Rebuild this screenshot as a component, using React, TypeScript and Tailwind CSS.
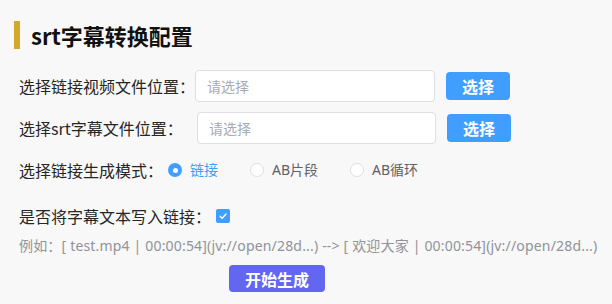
import React from "react";

const font = { fontFamily: '"Noto Sans CJK SC", "Noto Sans", sans-serif' };

function Radio({ label, checked, w }: { label: string; checked?: boolean; w: string }) {
  return (
    <div className={`flex items-center ${w}`}>
      {checked ? (
        <span className="flex h-[14px] w-[14px] items-center justify-center rounded-full bg-[#409eff]">
          <span className="h-[5px] w-[5px] rounded-full bg-white" />
        </span>
      ) : (
        <span className="h-[14px] w-[14px] rounded-full border border-[#dcdfe6] bg-white" />
      )}
      <span
        className={`ml-[8px] text-[14px] leading-none ${checked ? "text-[#409eff]" : "text-[#606266]"}`}
        style={{ fontFamily: '"Noto Sans", "Noto Sans CJK SC", sans-serif' }}
      >
        {label}
      </span>
    </div>
  );
}

export default function App() {
  return (
    <div className="min-h-[304px] w-[612px] bg-[#f8f8f8] pt-[21px] text-[#262626]" style={font}>
      <div className="flex h-[28px] items-center pl-[14px]">
        <div className="h-[28px] w-[6px] bg-[#d4a82a]" />
        <span className="ml-[11px] text-[22px] font-bold leading-none text-[#111]">srt字幕转换配置</span>
      </div>

      <div className="mt-[21px] flex h-[32px] items-center pl-[19px]">
        <span className="w-[176px] shrink-0 text-[16px] leading-none">选择链接视频文件位置：</span>
        <div className="flex h-[32px] w-[240px] items-center rounded-[4px] border border-[#dcdfe6] bg-white pl-[11px] text-[14px] text-[#a8abb2]">
          请选择
        </div>
        <button className="ml-[11px] flex h-[28px] w-[64px] items-center justify-center rounded-[4px] bg-[#409eff] text-[16px] font-bold text-white">
          选择
        </button>
      </div>

      <div className="mt-[10px] flex h-[32px] items-center pl-[19px]">
        <span className="w-[178px] shrink-0 text-[16px] leading-none">选择srt字幕文件位置：</span>
        <div className="flex h-[32px] w-[239px] items-center rounded-[4px] border border-[#dcdfe6] bg-white pl-[11px] text-[14px] text-[#a8abb2]">
          请选择
        </div>
        <button className="ml-[11px] flex h-[28px] w-[64px] items-center justify-center rounded-[4px] bg-[#409eff] text-[16px] font-bold text-white">
          选择
        </button>
      </div>

      <div className="mt-[16px] flex h-[20px] items-center pl-[19px]">
        <span className="w-[149px] shrink-0 text-[16px] leading-none">选择链接生成模式：</span>
        <Radio label="链接" checked w="w-[82px]" />
        <Radio label="AB片段" w="w-[100px]" />
        <Radio label="AB循环" w="w-[100px]" />
      </div>

      <div className="mt-[26px] flex h-[20px] items-center pl-[19px]">
        <span className="w-[197px] shrink-0 text-[16px] leading-none">是否将字幕文本写入链接：</span>
        <span className="flex h-[14px] w-[14px] items-center justify-center rounded-[2px] bg-[#409eff]">
          <svg width="10" height="10" viewBox="0 0 10 10" fill="none">
            <path d="M2 5.2 L4.2 7.2 L8 3" stroke="white" strokeWidth="1.4" strokeLinecap="round" strokeLinejoin="round" />
          </svg>
        </span>
      </div>

      <div
        className="mt-[11px] flex h-[18px] items-center whitespace-nowrap pl-[19px] text-[14px] leading-none tracking-[0.18px] text-[#909399]"
        style={{ fontFamily: '"Noto Sans", "Noto Sans CJK SC", sans-serif' }}
      >
        例如：[ test.mp4 | 00:00:54](jv://open/28d...) --&gt; [ 欢迎大家 | 00:00:54](jv://open/28d...)
      </div>

      <div className="mt-[10px] pl-[229px]">
        <button className="flex h-[27px] w-[96px] items-center justify-center rounded-[4px] bg-[#6366f1] text-[16px] font-bold text-white">
          开始生成
        </button>
      </div>
    </div>
  );
}
